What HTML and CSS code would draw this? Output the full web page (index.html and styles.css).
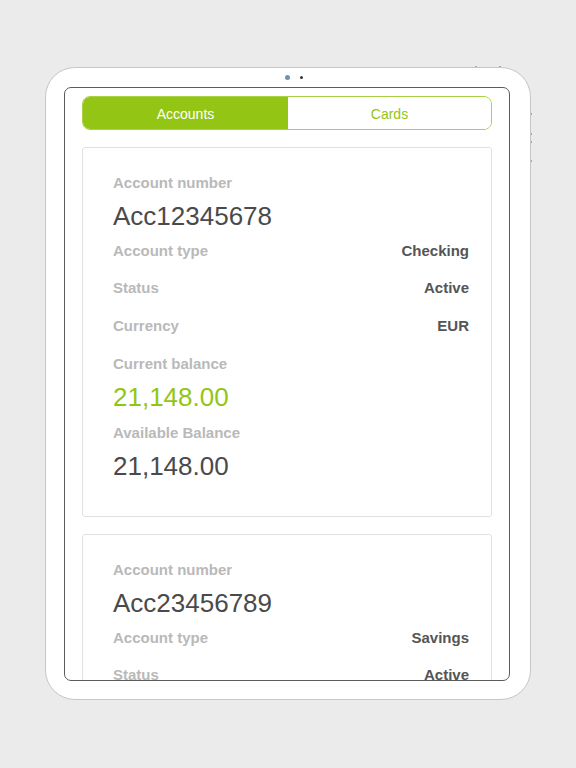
FILE: index.html
```html
<!DOCTYPE html>
<html lang="en">
<head>
<meta charset="utf-8">
<title>Accounts</title>
<link rel="stylesheet" href="styles.css">
</head>
<body>
<div class="device">
  <span class="tick tick-t1"></span>
  <span class="tick tick-t2"></span>
  <span class="tick tick-r1"></span>
  <span class="tick tick-r2"></span>
  <span class="tick tick-r3"></span>
  <span class="tick tick-r4"></span>
  <div class="bezel-top">
    <span class="camera"></span>
    <span class="sensor"></span>
  </div>
  <div class="screen">
    <div class="segmented">
      <div class="seg seg-active">Accounts</div>
      <div class="seg">Cards</div>
    </div>

    <div class="card">
      <div class="label">Account number</div>
      <div class="big">Acc12345678</div>
      <div class="row row-first"><span class="label">Account type</span><span class="val">Checking</span></div>
      <div class="row"><span class="label">Status</span><span class="val">Active</span></div>
      <div class="row row-wide"><span class="label">Currency</span><span class="val">EUR</span></div>
      <div class="label label-gap">Current balance</div>
      <div class="big green">21,148.00</div>
      <div class="label label-after">Available Balance</div>
      <div class="big">21,148.00</div>
    </div>

    <div class="card">
      <div class="label">Account number</div>
      <div class="big">Acc23456789</div>
      <div class="row row-first"><span class="label">Account type</span><span class="val">Savings</span></div>
      <div class="row"><span class="label">Status</span><span class="val">Active</span></div>
      <div class="row row-wide"><span class="label">Currency</span><span class="val">EUR</span></div>
    </div>
  </div>
</div>
</body>
</html>
```

FILE: styles.css
```css
html, body {
  margin: 0;
  padding: 0;
}
body {
  background: #ebebeb;
  height: 100vh;
  display: flex;
  align-items: center;
  justify-content: center;
  font-family: "Liberation Sans", Arial, sans-serif;
}
.device {
  position: relative;
  box-sizing: border-box;
  width: 486px;
  height: 633px;
  margin-top: -1px;
  background: #fff;
  border: 1px solid #c6c6c6;
  border-radius: 30px;
  padding: 0 20px 18px 18px;
  display: flex;
  flex-direction: column;
}
.tick {
  position: absolute;
  background: #a8a8a8;
}
.tick-t1, .tick-t2 { top: -2px; width: 2px; height: 1px; }
.tick-t1 { left: 429px; }
.tick-t2 { left: 453px; }
.tick-r1, .tick-r2, .tick-r3, .tick-r4 { right: -2px; width: 1px; height: 2px; }
.tick-r1 { top: 45px; }
.tick-r2 { top: 65px; }
.tick-r3 { top: 73px; }
.tick-r4 { top: 92px; }
.bezel-top {
  height: 19px;
  flex: none;
  display: flex;
  align-items: center;
  justify-content: center;
  gap: 10px;
  padding-left: 13px;
}
.camera {
  width: 5px;
  height: 5px;
  border-radius: 50%;
  background: #7393ad;
}
.sensor {
  width: 3px;
  height: 3px;
  border-radius: 50%;
  background: #333;
}
.screen {
  flex: 1;
  min-height: 0;
  box-sizing: border-box;
  border: 1px solid #5c5c5c;
  border-radius: 7px;
  overflow: hidden;
  padding: 8px 17px 0 17px;
  display: flex;
  flex-direction: column;
  gap: 17px;
}
.segmented {
  flex: none;
  display: flex;
  height: 34px;
  box-sizing: border-box;
  border: 1px solid #a9d146;
  border-radius: 8px;
  overflow: hidden;
}
.seg {
  flex: 1;
  display: flex;
  align-items: center;
  justify-content: center;
  padding-top: 1px;
  font-size: 14px;
  color: #93c614;
  background: #fff;
}
.seg-active {
  background: #93c614;
  color: #fff;
  flex: 0 0 205px;
}
.card {
  flex: none;
  border: 1px solid #e1e1e1;
  border-radius: 3px;
  padding: 25px 22px 35px 30px;
}
.label {
  font-size: 15px;
  font-weight: bold;
  color: #b9b9b9;
  line-height: 20px;
}
.big {
  font-size: 26px;
  line-height: 30px;
  color: #4a4a4a;
  margin-top: 8px;
}
.green {
  color: #93c614;
}
.row {
  display: flex;
  justify-content: space-between;
  line-height: 20px;
  margin-top: 17px;
}
.row-first {
  margin-top: 10px;
}
.row-wide {
  margin-top: 18px;
}
.val {
  font-size: 15px;
  font-weight: bold;
  color: #555;
}
.label-gap {
  margin-top: 18px;
}
.label-after {
  margin-top: 11px;
}
```
